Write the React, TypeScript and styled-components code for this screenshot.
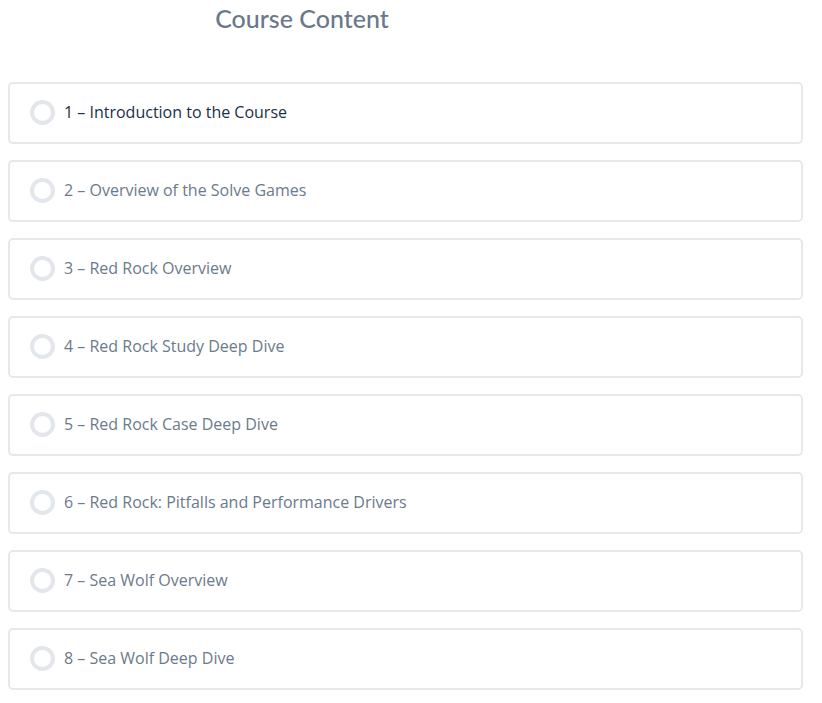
import * as React from "react";
import styled, { createGlobalStyle } from "styled-components";

const GlobalStyle = createGlobalStyle`
    body {
        margin: 0;
        background: #ffffff;
        font-family: "Open Sans", "Noto Sans", sans-serif;
    }
`;

const Page = styled.div`
    width: 795px;
    padding: 0 8px;
`;

const Title = styled.h2`
    width: 588px;
    margin: 0;
    padding-top: 3px;
    height: 82px;
    box-sizing: border-box;
    text-align: center;
    font-family: "Lato", "Open Sans", sans-serif;
    font-weight: 500;
    font-size: 25px;
    color: #6a7889;
`;

const Ul = styled.ul`
    list-style: none;
    margin: 0;
    padding: 0;
    display: flex;
    flex-direction: column;
    gap: 16px;
`;

const Item = styled.li<{ $active?: boolean }>`
    display: flex;
    align-items: center;
    gap: 9px;
    height: 62px;
    box-sizing: border-box;
    padding: 0 20px 2px;
    border: 2px solid #e6e8eb;
    border-radius: 5px;
    font-size: 16px;
    color: ${(p) => (p.$active ? "#1d2f45" : "#6b7a8c")};
    cursor: pointer;
`;

const Circle = styled.span`
    width: 25px;
    height: 25px;
    box-sizing: border-box;
    border: 4px solid #e3e6ea;
    border-radius: 50%;
    flex-shrink: 0;
`;

const lessons = [
    "1 – Introduction to the Course",
    "2 – Overview of the Solve Games",
    "3 – Red Rock Overview",
    "4 – Red Rock Study Deep Dive",
    "5 – Red Rock Case Deep Dive",
    "6 – Red Rock: Pitfalls and Performance Drivers",
    "7 – Sea Wolf Overview",
    "8 – Sea Wolf Deep Dive",
];

export default function App() {
    return (
        <Page>
            <GlobalStyle />
            <Title>Course Content</Title>
            <Ul>
                {lessons.map((title, index) => (
                    <Item key={index} $active={index === 0}>
                        <Circle />
                        {title}
                    </Item>
                ))}
            </Ul>
        </Page>
    );
}
